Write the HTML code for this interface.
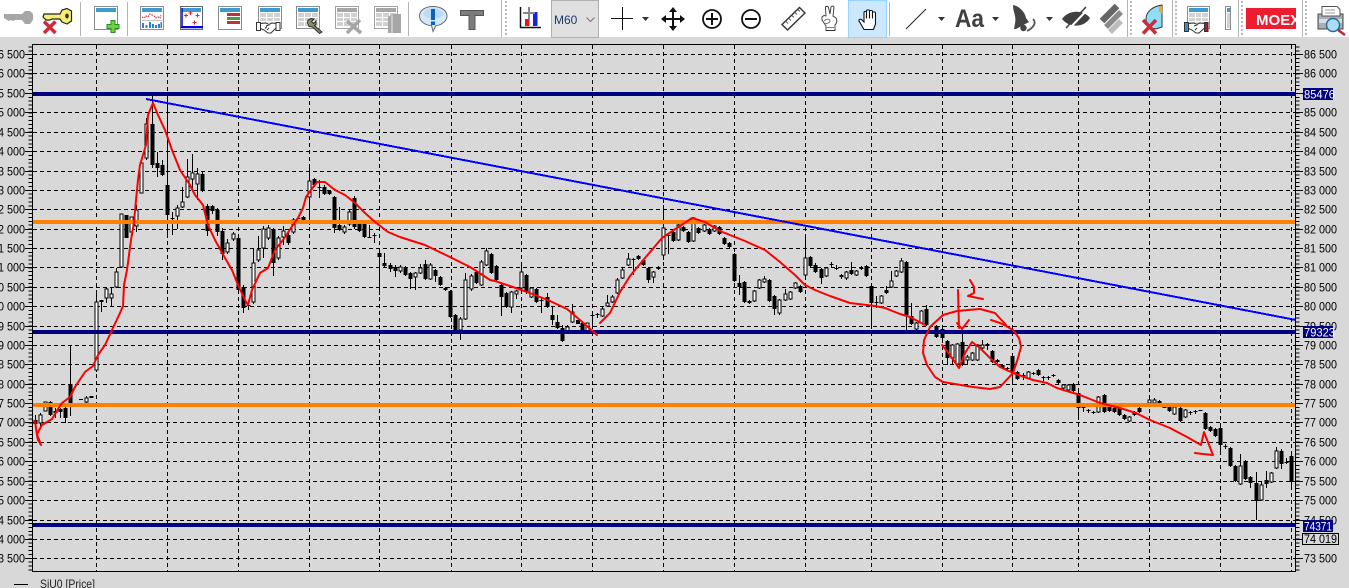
<!DOCTYPE html>
<html><head><meta charset="utf-8"><style>
html,body{margin:0;padding:0;width:1349px;height:588px;overflow:hidden;background:#d8d8d8}
svg{display:block;position:absolute;left:0;top:0}
text{font-family:"Liberation Sans",sans-serif}
</style></head><body>
<svg width="1349" height="588" viewBox="0 0 1349 588" xmlns="http://www.w3.org/2000/svg">
<rect width="1349" height="588" fill="#d8d8d8"/>
<!-- grid -->
<g stroke="#000" stroke-width="1" stroke-dasharray="4 3" shape-rendering="crispEdges" fill="none">
<path d="M33 54.5H1295M33 73.5H1295M33 112.5H1295M33 132.5H1295M33 151.5H1295M33 171.5H1295M33 190.5H1295M33 209.5H1295M33 229.5H1295M33 248.5H1295M33 267.5H1295M33 287.5H1295M33 306.5H1295M33 326.5H1295M33 345.5H1295M33 364.5H1295M33 384.5H1295M33 422.5H1295M33 442.5H1295M33 461.5H1295M33 481.5H1295M33 500.5H1295M33 520.5H1295M33 539.5H1295M33 558.5H1295"/>
<path d="M96.5 45V571M167.5 45V571M238.5 45V571M309.5 45V571M379.5 45V571M451.5 45V571M521.5 45V571M592.5 45V571M663.5 45V571M734.5 45V571M805.5 45V571M871.5 45V571M942.5 45V571M1012.5 45V571M1078.5 45V571M1149.5 45V571M1220.5 45V571M1291.5 45V571"/>
</g>
<!-- wicks -->
<path shape-rendering="crispEdges" stroke="#000" stroke-width="1" fill="none" d="M35.5 415V428M40.5 413V428M50.5 401V416M55.5 408V418M60.5 408V418M65.5 405V423M70.5 345V416M86.5 396V404M96.5 292V372M101.5 300V312M106.5 288V303M111.5 288V307M116.5 268V288M121.5 214V268M136.5 205V232M146.5 118V160M152.5 95V168M157.5 152V177M162.5 160V176M167.5 95V238M172.5 212V235M177.5 205V229M182.5 187V208M187.5 159V198M192.5 154V190M197.5 168V200M202.5 172V192M207.5 204V236M212.5 205V214M217.5 208V236M222.5 228V260M227.5 239V254M233.5 232V241M238.5 236V292M243.5 285V313M248.5 300V310M253.5 248V304M258.5 236V262M263.5 226V258M268.5 225V240M273.5 228V276M278.5 236V260M283.5 226V245M288.5 233V245M293.5 218V234M303.5 216V221M309.5 165V225M314.5 178V187M319.5 180V198M324.5 185V195M329.5 190V195M334.5 196V233M339.5 207V231M344.5 225V234M349.5 210V226M354.5 196V229M359.5 222V232M364.5 222V238M369.5 225V238M374.5 233V243M379.5 250V295M384.5 253V267M390.5 263V272M395.5 265V277M400.5 265V273M405.5 266V276M410.5 272V289M415.5 272V290M420.5 264V274M425.5 260V280M430.5 263V280M435.5 269V282M440.5 276V286M445.5 287V291M450.5 290V318M455.5 314V333M460.5 317V340M465.5 273V320M471.5 274V291M476.5 271V284M481.5 260V286M486.5 248V266M491.5 253V274M496.5 265V282M501.5 284V316M506.5 292V308M511.5 291V313M516.5 290V299M521.5 263V290M526.5 274V294M531.5 287V298M536.5 288V303M541.5 298V313M547.5 293V308M552.5 306V325M557.5 315V329M562.5 325V342M567.5 325V333M572.5 304V323M582.5 322V333M592.5 314V325M597.5 313V318M602.5 307V317M607.5 295V307M612.5 295V303M617.5 278V294M622.5 268V279M628.5 253V266M633.5 258V275M638.5 255V260M643.5 259V266M648.5 267V283M653.5 271V283M658.5 266V270M663.5 205V260M668.5 234V254M673.5 231V242M678.5 224V241M683.5 226V232M688.5 231V243M693.5 217V242M698.5 227V234M704.5 224V232M709.5 228V235M714.5 225V232M719.5 226V235M724.5 237V245M729.5 242V248M734.5 253V282M739.5 275V295M744.5 281V303M749.5 300V304M754.5 290V302M759.5 279V289M764.5 276V283M769.5 279V302M774.5 295V315M779.5 299V315M785.5 289V301M790.5 291V300M795.5 282V289M800.5 285V293M805.5 237V276M810.5 256V267M815.5 263V273M821.5 268V284M826.5 267V277M831.5 262V268M836.5 265V270M841.5 274V279M846.5 271V280M851.5 262V275M856.5 270V276M861.5 266V270M866.5 265V277M871.5 285V325M876.5 296V308M881.5 295V304M886.5 286V294M891.5 271V288M896.5 270V277M901.5 258V273M906.5 261V330M911.5 303V325M916.5 322V330M921.5 310V324M926.5 305V326M936.5 325V338M942.5 328V340M947.5 340V365M952.5 344V365M957.5 343V365M962.5 333V366M967.5 355V365M972.5 352V361M977.5 344V361M982.5 340V349M987.5 343V350M992.5 350V363M997.5 359V363M1002.5 364V369M1007.5 367V370M1012.5 355V382M1017.5 371V380M1023.5 373V380M1028.5 371V379M1033.5 372V375M1038.5 369V376M1043.5 376V381M1048.5 376V380M1053.5 374V377M1058.5 379V384M1063.5 384V389M1068.5 384V391M1073.5 383V392M1078.5 392V420M1083.5 406V412M1088.5 409V413M1093.5 411V414M1098.5 396V413M1104.5 394V413M1109.5 405V412M1114.5 407V413M1119.5 407V416M1124.5 414V420M1129.5 416V422M1134.5 411V416M1139.5 407V413M1149.5 398V404M1154.5 398V404M1159.5 400V407M1169.5 406V412M1174.5 406V415M1180.5 407V422M1185.5 409V418M1190.5 411V415M1195.5 410V414M1205.5 412V430M1210.5 426V432M1215.5 428V437M1220.5 427V452M1225.5 444V449M1230.5 447V467M1235.5 465V482M1240.5 454V485M1245.5 460V480M1250.5 476V488M1256.5 472V520M1261.5 482V501M1266.5 471V488M1271.5 472V483M1276.5 447V469M1281.5 449V469M1286.5 458V464M1291.5 452V487"/>
<!-- filled bodies -->
<path shape-rendering="crispEdges" fill="#000" d="M33.5 420h4V424h-4zM48.5 402h4V415h-4zM53.5 411h4V413h-4zM58.5 409h4V412h-4zM63.5 408h4V418h-4zM68.5 384h4V403h-4zM79 399h4v1h-4zM89.5 396h4V398h-4zM99.5 300h4v2h-4zM124.5 215h4V238h-4zM150.5 124h4V165h-4zM155.5 163h4V168h-4zM160.5 165h4V175h-4zM165.5 185h4V215h-4zM170.5 218h4v1h-4zM200.5 174h4V191h-4zM205.5 206h4V231h-4zM210.5 206h4V211h-4zM215.5 210h4V232h-4zM220.5 231h4V254h-4zM236.5 238h4V290h-4zM241.5 287h4V308h-4zM246.5 305h4v1h-4zM271.5 229h4V263h-4zM286.5 235h4V243h-4zM296.5 218h4v1h-4zM301.5 217h4V220h-4zM312.5 179h4V185h-4zM317.5 187h4v1h-4zM322.5 187h4V194h-4zM327.5 191h4V194h-4zM332.5 197h4V228h-4zM337.5 225h4V230h-4zM352.5 198h4V227h-4zM357.5 223h4V231h-4zM362.5 224h4V237h-4zM367.5 237h4v1h-4zM372.5 235h4v1h-4zM377.5 253h4V257h-4zM382.5 263h4V266h-4zM388.5 265h4V269h-4zM393.5 267h4V271h-4zM403.5 267h4V275h-4zM408.5 273h4V279h-4zM423.5 264h4V279h-4zM433.5 270h4V276h-4zM438.5 277h4V285h-4zM443.5 288h4V290h-4zM448.5 291h4V317h-4zM453.5 315h4V332h-4zM474.5 272h4V283h-4zM489.5 254h4V273h-4zM494.5 266h4V280h-4zM499.5 285h4V297h-4zM504.5 293h4V307h-4zM524.5 275h4V292h-4zM534.5 289h4V302h-4zM539.5 300h4v1h-4zM545.5 297h4V307h-4zM550.5 315h4V320h-4zM555.5 322h4V328h-4zM560.5 328h4V341h-4zM576 320h4V324h-4zM580.5 323h4V332h-4zM590.5 315h4v1h-4zM595.5 314h4v1h-4zM631.5 259h4v1h-4zM636.5 256h4V259h-4zM641.5 260h4V265h-4zM646.5 268h4V280h-4zM656.5 267h4V269h-4zM666.5 235h4v1h-4zM671.5 232h4V241h-4zM681.5 227h4V231h-4zM686.5 232h4V242h-4zM696.5 228h4V233h-4zM707.5 229h4V234h-4zM717.5 227h4V234h-4zM722.5 238h4V244h-4zM727.5 243h4V247h-4zM732.5 254h4V281h-4zM737.5 283h4V287h-4zM742.5 282h4V302h-4zM747.5 301h4V303h-4zM767.5 280h4V301h-4zM772.5 296h4V309h-4zM798.5 286h4V292h-4zM808.5 257h4V266h-4zM813.5 265h4V272h-4zM819.5 269h4V278h-4zM829.5 264h4v1h-4zM834.5 268h4v1h-4zM839.5 275h4V277h-4zM849.5 270h4V274h-4zM859.5 268h4v1h-4zM864.5 266h4V276h-4zM869.5 286h4V303h-4zM874.5 302h4v1h-4zM884.5 290h4V293h-4zM904.5 262h4V315h-4zM909.5 316h4V324h-4zM924.5 309h4V325h-4zM934.5 326h4V337h-4zM940.5 329h4V338h-4zM945.5 341h4V358h-4zM960.5 342h4V365h-4zM985.5 344h4V346h-4zM990.5 351h4V362h-4zM995.5 360h4V362h-4zM1000.5 365h4V368h-4zM1005.5 368h4v1h-4zM1010.5 356h4V373h-4zM1015.5 372h4V379h-4zM1021.5 375h4v1h-4zM1031.5 373h4v1h-4zM1036.5 370h4V375h-4zM1041.5 377h4v1h-4zM1046.5 377h4v1h-4zM1051.5 375h4V376h-4zM1056.5 380h4V383h-4zM1071.5 384h4V391h-4zM1076.5 393h4V408h-4zM1081.5 407h4v1h-4zM1086.5 410h4v1h-4zM1091.5 412h4v1h-4zM1102.5 395h4V412h-4zM1107.5 406h4V411h-4zM1112.5 408h4V412h-4zM1117.5 408h4V415h-4zM1122.5 415h4V419h-4zM1132.5 412h4V415h-4zM1137.5 408h4V412h-4zM1142.5 406h4v1h-4zM1157.5 401h4V406h-4zM1162.5 407h4v1h-4zM1167.5 407h4V411h-4zM1178.5 408h4V421h-4zM1188.5 412h4v1h-4zM1193.5 411h4v1h-4zM1198.5 410h4v1h-4zM1203.5 413h4V429h-4zM1208.5 427h4V431h-4zM1213.5 429h4V436h-4zM1218.5 428h4V445h-4zM1223.5 446h4v1h-4zM1228.5 448h4V466h-4zM1233.5 466h4V481h-4zM1243.5 461h4V479h-4zM1248.5 477h4V483h-4zM1254.5 483h4V501h-4zM1264.5 480h4V484h-4zM1279.5 451h4V464h-4zM1284.5 462h4v1h-4zM1289.5 456h4V482h-4z"/>
<!-- hollow bodies -->
<path shape-rendering="crispEdges" fill="#fff" stroke="#000" stroke-width="1" d="M39 415h3V423h-3zM44 402h3V411h-3zM85 398h3V402h-3zM95 302h3V370h-3zM105 289h3V298h-3zM110 294h3V298h-3zM115 272h3V287h-3zM120 214h3V267h-3zM130 217h3V232h-3zM135 210h3V226h-3zM140 163h3V193h-3zM145 124h3V158h-3zM176 208h3V216h-3zM181 202h3V207h-3zM186 177h3V197h-3zM191 173h3V179h-3zM196 174h3V184h-3zM226 243h3V252h-3zM232 234h3V239h-3zM252 263h3V302h-3zM257 250h3V260h-3zM262 229h3V248h-3zM267 228h3V238h-3zM277 238h3V258h-3zM282 231h3V237h-3zM292 220h3V232h-3zM308 181h3V197h-3zM343 227h3V232h-3zM348 212h3V224h-3zM399 267h3V271h-3zM414 273h3V277h-3zM419 268h3V273h-3zM429 265h3V279h-3zM459 319h3V330h-3zM464 280h3V319h-3zM470 276h3V289h-3zM480 262h3V285h-3zM485 251h3V265h-3zM510 292h3V307h-3zM515 291h3V294h-3zM520 272h3V288h-3zM530 288h3V297h-3zM566 327h3V331h-3zM571 312h3V322h-3zM586 323h3V331h-3zM601 309h3V316h-3zM606 303h3V306h-3zM611 297h3V302h-3zM616 280h3V293h-3zM621 270h3V278h-3zM627 259h3V265h-3zM652 272h3V277h-3zM662 228h3V255h-3zM677 225h3V240h-3zM692 218h3V241h-3zM703 225h3V231h-3zM713 226h3V231h-3zM753 291h3V301h-3zM758 280h3V288h-3zM763 279h3V282h-3zM778 300h3V313h-3zM784 294h3V300h-3zM789 292h3V299h-3zM794 283h3V288h-3zM804 258h3V275h-3zM825 268h3V276h-3zM845 272h3V278h-3zM855 271h3V275h-3zM880 296h3V303h-3zM890 281h3V287h-3zM895 271h3V276h-3zM900 261h3V272h-3zM915 323h3V329h-3zM920 311h3V323h-3zM951 345h3V358h-3zM956 344h3V364h-3zM966 357h3V360h-3zM971 353h3V360h-3zM976 345h3V360h-3zM981 345h3V348h-3zM1027 372h3V378h-3zM1062 385h3V388h-3zM1067 385h3V390h-3zM1097 397h3V412h-3zM1128 417h3V421h-3zM1148 400h3V403h-3zM1153 400h3V403h-3zM1173 407h3V414h-3zM1184 410h3V417h-3zM1239 466h3V484h-3zM1260 485h3V500h-3zM1270 473h3V482h-3zM1275 451h3V468h-3z"/>
<!-- levels -->
<g shape-rendering="crispEdges">
<rect x="33" y="92" width="1263" height="4" fill="#000080"/>
<rect x="33" y="330" width="1263" height="4" fill="#000080"/>
<rect x="33" y="523" width="1263" height="4" fill="#000080"/>
<rect x="33" y="220" width="1263" height="4" fill="#ff8000"/>
<rect x="33" y="403" width="1263" height="4" fill="#ff8000"/>
<path d="M146 99L1296 320" stroke="#0000ff" stroke-width="2" fill="none"/>
</g>
<!-- red drawings -->
<g fill="none" stroke="#ff0000" stroke-width="2" stroke-linejoin="round" stroke-linecap="round">
<path d="M35 421L37 435L38 440L41 445L38 437L37 434L42 425L52 419L58 409L62 403L70 397L75 387L85 372L93 366L98 355L105 345L112 330L120 313L123 306L124 285L127 270L131 240L134 222L136 200L138 180L140 165L146 145L148 115L153 103L158 115L165 130L172 150L180 170L190 185L195 195L203 205L208 225L215 240L225 258L232 270L238 285L245 300L248 305L252 290L260 273L268 268L275 250L283 240L293 225L298 218L303 208L306 197L311 190L317 182L325 182L335 190L345 195L355 203L365 213L375 222L388 232L400 237L425 245L450 257L470 267L478 272L490 280L495 281L510 286L530 293L550 301L567 309L580 320L597 335"/>
<path d="M600 323L610 313L620 292L630 276L645 258L662 238L680 226L692 218L705 222L720 231L745 241L765 250L780 262L795 275L805 285L815 290L830 296L850 303L875 306L885 308L900 314L910 317L925 325"/>
<path d="M991 320L1000 323L1006 326L1013 330L1019 338L1021 347L1018 358L1013 373L1000 387L990 389L973 387L943 382L935 377L927 365L923 353L924 340L930 327L943 315L957 311L980 309L995 313L1006 325"/>
<path d="M958 290L959 328M957 323L962 329L969 320"/>
<path d="M970 280L974 287L974 293L968 296L983 299"/>
<path d="M942 345L950 355L959 368L965 353L972 342L980 348L990 358L1000 367L1013 373L1033 380L1047 383L1057 388L1070 392L1080 395L1100 403L1120 408L1136 413L1150 420L1170 428L1187 437L1201 445L1204 432L1213 455L1203 454L1195 453"/>
</g>
<!-- frame and axes -->
<g shape-rendering="crispEdges" fill="none" stroke="#000">
<path d="M32.5 44.5H1295.5V571.5H32.5Z"/>
<path d="M1297.5 46.5V571" stroke-width="4" stroke-dasharray="1 2.874"/>
<path d="M30.5 46.5V571" stroke-width="4" stroke-dasharray="1 2.874"/>
<path d="M1296 54.5h7M1296 73.5h7M1296 93.5h7M1296 112.5h7M1296 132.5h7M1296 151.5h7M1296 171.5h7M1296 190.5h7M1296 209.5h7M1296 229.5h7M1296 248.5h7M1296 267.5h7M1296 287.5h7M1296 306.5h7M1296 326.5h7M1296 345.5h7M1296 364.5h7M1296 384.5h7M1296 403.5h7M1296 422.5h7M1296 442.5h7M1296 461.5h7M1296 481.5h7M1296 500.5h7M1296 520.5h7M1296 539.5h7M1296 558.5h7"/>
<path d="M25 54.5h7M25 73.5h7M25 93.5h7M25 112.5h7M25 132.5h7M25 151.5h7M25 171.5h7M25 190.5h7M25 209.5h7M25 229.5h7M25 248.5h7M25 267.5h7M25 287.5h7M25 306.5h7M25 326.5h7M25 345.5h7M25 364.5h7M25 384.5h7M25 403.5h7M25 422.5h7M25 442.5h7M25 461.5h7M25 481.5h7M25 500.5h7M25 520.5h7M25 539.5h7M25 558.5h7"/>
</g>
<!-- right labels -->
<g font-size="12" fill="#000">
<text x="1304" y="58.5" textLength="33" lengthAdjust="spacingAndGlyphs">86 500</text>
<text x="1304" y="77.5" textLength="33" lengthAdjust="spacingAndGlyphs">86 000</text>
<text x="1304" y="116.5" textLength="33" lengthAdjust="spacingAndGlyphs">85 000</text>
<text x="1304" y="136.5" textLength="33" lengthAdjust="spacingAndGlyphs">84 500</text>
<text x="1304" y="155.5" textLength="33" lengthAdjust="spacingAndGlyphs">84 000</text>
<text x="1304" y="175.5" textLength="33" lengthAdjust="spacingAndGlyphs">83 500</text>
<text x="1304" y="194.5" textLength="33" lengthAdjust="spacingAndGlyphs">83 000</text>
<text x="1304" y="213.5" textLength="33" lengthAdjust="spacingAndGlyphs">82 500</text>
<text x="1304" y="233.5" textLength="33" lengthAdjust="spacingAndGlyphs">82 000</text>
<text x="1304" y="252.5" textLength="33" lengthAdjust="spacingAndGlyphs">81 500</text>
<text x="1304" y="271.5" textLength="33" lengthAdjust="spacingAndGlyphs">81 000</text>
<text x="1304" y="291.5" textLength="33" lengthAdjust="spacingAndGlyphs">80 500</text>
<text x="1304" y="310.5" textLength="33" lengthAdjust="spacingAndGlyphs">80 000</text>
<text x="1304" y="330.5" textLength="33" lengthAdjust="spacingAndGlyphs">79 500</text>
<text x="1304" y="349.5" textLength="33" lengthAdjust="spacingAndGlyphs">79 000</text>
<text x="1304" y="368.5" textLength="33" lengthAdjust="spacingAndGlyphs">78 500</text>
<text x="1304" y="388.5" textLength="33" lengthAdjust="spacingAndGlyphs">78 000</text>
<text x="1304" y="407.5" textLength="33" lengthAdjust="spacingAndGlyphs">77 500</text>
<text x="1304" y="426.5" textLength="33" lengthAdjust="spacingAndGlyphs">77 000</text>
<text x="1304" y="446.5" textLength="33" lengthAdjust="spacingAndGlyphs">76 500</text>
<text x="1304" y="465.5" textLength="33" lengthAdjust="spacingAndGlyphs">76 000</text>
<text x="1304" y="485.5" textLength="33" lengthAdjust="spacingAndGlyphs">75 500</text>
<text x="1304" y="504.5" textLength="33" lengthAdjust="spacingAndGlyphs">75 000</text>
<text x="1304" y="524.5" textLength="33" lengthAdjust="spacingAndGlyphs">74 500</text>
<text x="1304" y="562.5" textLength="33" lengthAdjust="spacingAndGlyphs">73 500</text>
</g>
<!-- left labels -->
<g font-size="12" fill="#000">
<text x="-8" y="58.5" textLength="33" lengthAdjust="spacingAndGlyphs">86 500</text>
<text x="-8" y="77.5" textLength="33" lengthAdjust="spacingAndGlyphs">86 000</text>
<text x="-8" y="97.5" textLength="33" lengthAdjust="spacingAndGlyphs">85 500</text>
<text x="-8" y="116.5" textLength="33" lengthAdjust="spacingAndGlyphs">85 000</text>
<text x="-8" y="136.5" textLength="33" lengthAdjust="spacingAndGlyphs">84 500</text>
<text x="-8" y="155.5" textLength="33" lengthAdjust="spacingAndGlyphs">84 000</text>
<text x="-8" y="175.5" textLength="33" lengthAdjust="spacingAndGlyphs">83 500</text>
<text x="-8" y="194.5" textLength="33" lengthAdjust="spacingAndGlyphs">83 000</text>
<text x="-8" y="213.5" textLength="33" lengthAdjust="spacingAndGlyphs">82 500</text>
<text x="-8" y="233.5" textLength="33" lengthAdjust="spacingAndGlyphs">82 000</text>
<text x="-8" y="252.5" textLength="33" lengthAdjust="spacingAndGlyphs">81 500</text>
<text x="-8" y="271.5" textLength="33" lengthAdjust="spacingAndGlyphs">81 000</text>
<text x="-8" y="291.5" textLength="33" lengthAdjust="spacingAndGlyphs">80 500</text>
<text x="-8" y="310.5" textLength="33" lengthAdjust="spacingAndGlyphs">80 000</text>
<text x="-8" y="330.5" textLength="33" lengthAdjust="spacingAndGlyphs">79 500</text>
<text x="-8" y="349.5" textLength="33" lengthAdjust="spacingAndGlyphs">79 000</text>
<text x="-8" y="368.5" textLength="33" lengthAdjust="spacingAndGlyphs">78 500</text>
<text x="-8" y="388.5" textLength="33" lengthAdjust="spacingAndGlyphs">78 000</text>
<text x="-8" y="407.5" textLength="33" lengthAdjust="spacingAndGlyphs">77 500</text>
<text x="-8" y="426.5" textLength="33" lengthAdjust="spacingAndGlyphs">77 000</text>
<text x="-8" y="446.5" textLength="33" lengthAdjust="spacingAndGlyphs">76 500</text>
<text x="-8" y="465.5" textLength="33" lengthAdjust="spacingAndGlyphs">76 000</text>
<text x="-8" y="485.5" textLength="33" lengthAdjust="spacingAndGlyphs">75 500</text>
<text x="-8" y="504.5" textLength="33" lengthAdjust="spacingAndGlyphs">75 000</text>
<text x="-8" y="524.5" textLength="33" lengthAdjust="spacingAndGlyphs">74 500</text>
<text x="-8" y="543.5" textLength="33" lengthAdjust="spacingAndGlyphs">74 000</text>
<text x="-8" y="562.5" textLength="33" lengthAdjust="spacingAndGlyphs">73 500</text>
</g>
<!-- price tags -->
<g font-size="12">
<rect x="1303" y="88" width="30" height="12" fill="#000080"/>
<text x="1304" y="98.5" fill="#fff" textLength="31" lengthAdjust="spacingAndGlyphs">85476</text>
<rect x="1303" y="326" width="30" height="12" fill="#000080"/>
<text x="1304" y="336.5" fill="#fff" textLength="31" lengthAdjust="spacingAndGlyphs">79323</text>
<rect x="1303" y="520" width="30" height="12" fill="#000080"/>
<text x="1304" y="530.5" fill="#fff" textLength="28" lengthAdjust="spacingAndGlyphs">74371</text>
<rect x="1302.5" y="533.5" width="36" height="11" fill="#d8d8d8" stroke="#000" shape-rendering="crispEdges"/>
<text x="1304" y="543" fill="#000" textLength="33" lengthAdjust="spacingAndGlyphs">74 019</text>
</g>
<!-- legend -->
<path d="M14 584.5H28" stroke="#000" shape-rendering="crispEdges"/>
<text x="40" y="588" font-size="12" fill="#222" textLength="55" lengthAdjust="spacingAndGlyphs">SiU0 [Price]</text>

<!-- toolbar -->
<rect width="1349" height="37" fill="#fff"/>
<!-- separators -->
<g shape-rendering="crispEdges" fill="none">
<path d="M80.5 2V36M127.5 2V36M408.5 2V36M501.5 0V37M889.5 2V36M1127.5 0V37M1172.5 0V37M1238.5 0V37M1302.5 0V37" stroke="#b4b4b4"/>
<path d="M506 1V37M1131 1V37M1176 1V37M1242 1V37M1306 1V37" stroke="#bbb" stroke-width="2" stroke-dasharray="2 2"/>
</g>
<!-- gray key -->
<path d="M4 14H22L25 11H30L33 14V20L30 24H25L22 20H15L13 21L11 20L9 21L7 20L4 18Z" fill="#a6a6a6"/>
<!-- yellow key -->
<path d="M44 14H60L62 10L67 8.5L71.5 11V21L67 24L62 22L60 19H52L50 20H46L43 17Z" fill="#f6ef72" stroke="#222" stroke-width="1.2"/>
<ellipse cx="67" cy="16" rx="1.8" ry="2.5" fill="#333"/>
<path d="M44 21.5L55.5 33M55.5 21.5L44 33" stroke="#d02b38" stroke-width="3.5" fill="none"/>
<!-- new window -->
<rect x="94.5" y="6.5" width="23" height="23" fill="#fff" stroke="#8d8d8d"/>
<rect x="96" y="8" width="20" height="4" fill="#3d9bd0"/>
<path d="M111 20.5h4v4h4v4h-4v4h-4v-4h-4v-4h4z" fill="#6fd33c" stroke="#2e8b22"/>
<!-- chart window -->
<rect x="140.5" y="6.5" width="23" height="23" fill="#fff" stroke="#8d8d8d"/>
<rect x="142" y="8" width="20" height="4" fill="#3d9bd0"/>
<path d="M142 17l2 1l2-2l2 1l2-3l2 1l2 1l2 2l2-1l2 1l1-3" fill="none" stroke="#d3333c" stroke-dasharray="1.5 1" stroke-width="1.2"/>
<path d="M142 20.5H162" stroke="#c4c4c4"/>
<path d="M142 23h2v5h-2zM145.5 25h2v3h-2zM149 22h2v6h-2zM152 24h2v4h-2zM155 25h2v3h-2zM158 24h2v4h-2zM160.5 22h1.5v6h-1.5z" fill="#2a83c4"/>
<!-- dots window -->
<rect x="180.5" y="6.5" width="22" height="23" fill="#fff" stroke="#666"/>
<rect x="182" y="8" width="19" height="4" fill="#3d9bd0"/>
<path d="M182 8V27.5H202" stroke="#0000ee" stroke-width="1.5" fill="none"/>
<rect x="181" y="26" width="22" height="2" fill="#0000ee"/>
<path d="M184 15.5h4M186 13.5v4M188.5 13h4M190.5 11v4M195.5 15.5h4M197.5 13.5v4M192.5 22.5h4M194.5 20.5v4" stroke="#e2222c" stroke-width="1.1"/>
<!-- bars window -->
<rect x="218.5" y="6.5" width="23" height="23" fill="#fff" stroke="#8d8d8d"/>
<rect x="220" y="8" width="20" height="4" fill="#3d9bd0"/>
<rect x="227" y="13" width="13" height="3" fill="#b8333c"/>
<rect x="227" y="17" width="13" height="3" fill="#4f9a3c"/>
<rect x="227" y="21" width="13" height="3" fill="#b8333c"/>
<!-- table handshake -->
<rect x="258.5" y="6.5" width="23" height="22" fill="#fff" stroke="#8d8d8d"/>
<rect x="260" y="8" width="20" height="4" fill="#3d9bd0"/>
<path d="M260 13h20v13h-20z" fill="#d2d2d2"/>
<path d="M266.5 13v13M273.5 13v13M260 17.5h20M260 21.5h20" stroke="#fff"/>
<rect x="256.5" y="22.5" width="24" height="9" fill="#fff"/>
<path d="M256.5 22.5h4v8h-4zM276 22.5h4v8h-4z" fill="#fff" stroke="#333"/>
<path d="M260.5 23.5L266 23L269 24.5L272 23L276 23.5V28L271 33L268 33L264 30L260.5 28.5ZM266 26L270 24.5M267 30L269 28M265 28.5L267 26.5" fill="#fff" stroke="#333"/>
<!-- table wrench -->
<rect x="296.5" y="6.5" width="23" height="22" fill="#fff" stroke="#8d8d8d"/>
<rect x="298" y="8" width="20" height="4" fill="#3d9bd0"/>
<path d="M298 13h20v13h-20z" fill="#d2d2d2"/>
<path d="M304.5 13v13M311.5 13v13M298 17.5h20M298 21.5h20" stroke="#fff"/>
<path d="M308 20L311 18.5L314 19L311.5 21.5L313.5 23.5L316 21L316 24.5L314.5 25.5L322 32L319.5 33.5L312.5 27L309 26.5L307.5 23Z" fill="#8b8b6b" stroke="#222" stroke-width=".9"/>
<!-- disabled table x -->
<rect x="335.5" y="6.5" width="23" height="22" fill="#fff" stroke="#a2a2a2"/>
<rect x="337" y="8" width="20" height="4" fill="#a6a6a6"/>
<path d="M337 13h20v13h-20z" fill="#d0d0d0"/>
<path d="M343.5 13v13M350.5 13v13M337 17.5h20M337 21.5h20" stroke="#fff"/>
<path d="M347 21L361 33M360 20L347 33" stroke="#a6a6a6" stroke-width="3.5" fill="none"/>
<!-- disabled table cylinder -->
<rect x="374.5" y="6.5" width="23" height="22" fill="#fff" stroke="#a2a2a2"/>
<rect x="376" y="8" width="20" height="4" fill="#a6a6a6"/>
<path d="M376 13h20v13h-20z" fill="#d0d0d0"/>
<path d="M382.5 13v13M389.5 13v13M376 17.5h20M376 21.5h20" stroke="#fff"/>
<path d="M388 17L392 14H401V33H388Z" fill="#a6a6a6"/>
<path d="M392 15V33" stroke="#eee"/>
<!-- info bubble -->
<path d="M433 6.5C441 6.5 447 10.5 447 16C447 21 441 25.5 436 25.5L433 31.5L431.5 25.5C425 25.5 419.5 21 419.5 16C419.5 10.5 425 6.5 433 6.5Z" fill="#d3e9fb" stroke="#6a6a6a"/>
<path d="M423 14C425 9.5 430 8 433 8C437 8 441 9.5 444 14C440 20 427 20 423 14Z" fill="#b9dcf6"/>
<path d="M431 9h4v11h-4zM431 21.5h4v3.5h-4z" fill="#1060b8"/>
<!-- T -->
<path d="M460.5 10.5H483.5V15.5H475V29.5H469V15.5H460.5Z" fill="#7d7d7d" stroke="#555"/>
<!-- chart add -->
<path d="M520.5 7V27.5H541" stroke="#111" stroke-width="1.5" fill="none"/>
<rect x="525" y="19" width="4.5" height="7" fill="#e8141c"/>
<rect x="533" y="12" width="4.5" height="14" fill="#1226e0"/>
<path d="M529 7V19M523 13H535" stroke="#888" stroke-width="2"/>
<!-- M60 -->
<rect x="551.5" y="0.5" width="47" height="37" fill="#e0e0e0" stroke="#b0b0b0" shape-rendering="crispEdges"/>
<text x="554" y="24" font-size="12" fill="#1a3a6a">M60</text>
<path d="M586.5 17.5L590.5 21.5L594.5 17.5" stroke="#777" fill="none" stroke-width="1.1"/>
<!-- crosshair -->
<path d="M611 18.5H633M622.5 7V30" stroke="#111" shape-rendering="crispEdges"/>
<path d="M642 17H649L645.5 21Z" fill="#333"/>
<!-- move -->
<path d="M673 9V29M663 19H683" stroke="#111" stroke-width="2"/>
<path d="M673 7L669 12H677ZM673 31L669 26H677ZM661 19L666 15V23ZM685 19L680 15V23Z" fill="#111"/>
<!-- zoom -->
<circle cx="712" cy="19" r="9" fill="none" stroke="#111" stroke-width="1.8"/>
<path d="M706 19H718M712 13V25" stroke="#111" stroke-width="2"/>
<circle cx="751" cy="19" r="9" fill="none" stroke="#111" stroke-width="1.8"/>
<path d="M745 19H757" stroke="#111" stroke-width="2"/>
<!-- ruler -->
<path d="M782 24.5L799.5 7.5L805 13L787.5 30Z" fill="#fff" stroke="#333" stroke-width="1.4"/>
<path d="M786 21.5l2 2M789 18.500l2 2M792 15.500l2 2M795 12.500l2 2M798 9.500l2 2" stroke="#555"/>
<!-- peace hand -->
<path d="M826 30.5V26L822 20V17L824 15.500L826 16L825.500 7.500C825.500 6 828 6 828.500 7.500L830 14L831 7C831.500 5.500 834 6 834 7.500L833 16L836 18C837.500 20 837 23 835 25V30.500Z" fill="#fff" stroke="#333" stroke-width=".9"/>
<path d="M824 21C827 18 830 19 830 21C830 23 826 24 825 23M827 27.500H834" fill="none" stroke="#555" stroke-width=".8"/>
<!-- hand active -->
<rect x="848.5" y="0.5" width="38" height="37" fill="#cce8ff" stroke="#99d1ff" shape-rendering="crispEdges"/>
<path d="M864 29.5L859 21C858.5 19.5 860.5 18.5 862 20L864 22V12.5C864 11 866.5 11 866.5 12.5V18.5V11C866.5 9.5 869.5 9.5 869.5 11V18.5V11.5C869.5 10 872.5 10 872.5 11.5V18.5V13C872.5 11.5 875.5 11.5 875.5 13V24L873.5 29.5Z" fill="#fff" stroke="#111" stroke-width="1.1"/>
<!-- line tool -->
<path d="M906 29L926 9" stroke="#222" fill="none"/>
<path d="M938 17H945L941.5 21Z" fill="#333"/>
<!-- Aa -->
<text x="955" y="27" font-size="25" font-weight="bold" fill="#404040" textLength="29" lengthAdjust="spacingAndGlyphs">Aa</text>
<path d="M992 17H999L995.5 21Z" fill="#333"/>
<!-- bell -->
<path d="M1013 5C1019 6 1025 12 1026 18L1029 22L1016 29L1014 29C1015 24 1016 20 1015 16C1014 12 1013 9 1013 5Z" fill="#444"/>
<path d="M1033 19C1037 23 1033 28 1027 31" fill="none" stroke="#555" stroke-width="1.8"/>
<circle cx="1023.5" cy="28" r="3.2" fill="#444"/>
<path d="M1046 17H1053L1049.5 21Z" fill="#333"/>
<!-- eye -->
<path d="M1062 19C1068 10 1083 9 1090 18C1084 28 1069 28 1062 19Z" fill="#404040"/>
<path d="M1069 29L1089 8" stroke="#fff" stroke-width="2"/>
<path d="M1066 28L1086 7" stroke="#404040" stroke-width="1.6"/>
<!-- pencils -->
<path d="M1102 21L1117 6" stroke="#666" stroke-width="6.5" fill="none"/>
<path d="M1106 27L1121 12" stroke="#8a8a8a" stroke-width="5.5" fill="none"/>
<path d="M1110 32L1121 21" stroke="#bcbcbc" stroke-width="5.5" fill="none"/>
<!-- pie x -->
<path d="M1162 5C1154 6 1146 11 1146 19C1146 23 1148 28 1156 29L1162 27Z" fill="#8fdcfb" stroke="#333"/>
<path d="M1159 6H1162V14L1159 12Z" fill="#f4a623"/>
<path d="M1143 20L1156 33.5M1156 20L1143 33.5" stroke="#d02b38" stroke-width="3.5" fill="none"/>
<!-- table color handshake -->
<rect x="1187.5" y="6.5" width="22" height="22" fill="#fff" stroke="#8d8d8d"/>
<rect x="1189" y="8" width="19" height="4" fill="#3d9bd0"/>
<path d="M1189 13h19v13h-19z" fill="#d2d2d2"/>
<path d="M1195.5 13v13M1201.5 13v13M1189 17.5h19M1189 21.5h19" stroke="#fff"/>
<rect x="1184.5" y="22.5" width="4" height="9" fill="#3a8fc8" stroke="#333"/>
<rect x="1204.5" y="22.5" width="3.5" height="9" fill="#b01a22" stroke="#333"/>
<path d="M1188.5 23.5L1194 23L1197 24.5L1200 23L1204.5 23.5V28L1199 33L1196 33L1192 30L1188.5 28.5ZM1194 26L1198 24.5M1195 30L1197 28" fill="#fff" stroke="#333"/>
<!-- cropped table -->
<rect x="1225.5" y="6.5" width="5" height="23" fill="#fff" stroke="#8d8d8d"/>
<rect x="1227" y="8" width="3" height="4" fill="#3d9bd0"/>
<rect x="1227" y="13" width="3" height="15" fill="#d2d2d2"/>
<rect x="1231" y="5" width="5" height="26" fill="#fff"/>
<!-- MOEX -->
<svg x="1246" y="8" width="50" height="21" viewBox="0 0 50 21">
<rect width="50" height="21" fill="#ed1c2e"/>
<text x="10" y="17" font-size="15" font-weight="bold" fill="#fff">MOEX</text>
</svg>
<!-- print preview -->
<path d="M1318 14H1343V29H1318Z" fill="#a8b0b6" stroke="#444"/>
<path d="M1322 6.5H1337L1340 9.5V16H1322Z" fill="#fff" stroke="#555"/>
<path d="M1325 10H1335M1325 13H1335" stroke="#999"/>
<rect x="1319" y="19" width="23" height="4" fill="#d8dde0"/>
<circle cx="1333" cy="25" r="6.5" fill="#a8ddf5" stroke="#2a6a98" stroke-width="1.4"/>
<path d="M1338 30L1345 35" stroke="#c8242c" stroke-width="2.5"/>
</svg>
</body></html>
